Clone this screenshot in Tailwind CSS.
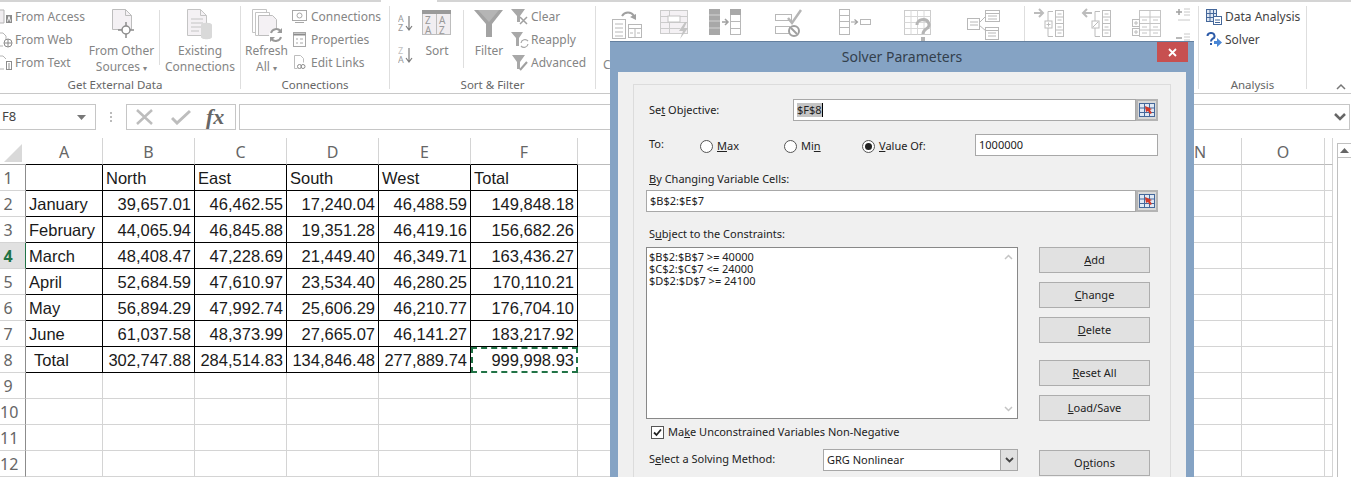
<!DOCTYPE html>
<html lang="en">
<head>
  <meta charset="UTF-8" />
  <title>Solver Parameters</title>
  <script src="https://cdn.jsdelivr.net/npm/@tailwindcss/browser@4"></script>
</head>
<body class="relative w-[1351px] h-[477px] overflow-hidden bg-white font-['Noto_Sans',sans-serif] text-[12px] text-[#858585]">

  <!-- tab strip edge, gap under the active tab -->
  <div class="flex h-[2px]">
    <div class="w-[381px] bg-[#d4d4d4]"></div>
    <div class="w-[56px]"></div>
    <div class="flex-1 bg-[#d4d4d4]"></div>
  </div>

  <!-- ribbon -->
  <div class="flex h-[92px] border-b border-[#c8c8c8]">

    <!-- Get External Data -->
    <div class="flex flex-col w-[250px] -ml-[10px] shrink-0">
      <div class="flex flex-1 pl-[10px]">
        <div class="flex flex-col w-[91px] pt-[3px]">
          <div class="flex items-center h-[23px] gap-[2px]">
            <svg class="w-[13px] h-[16px] shrink-0" viewBox="0 0 13 16"><path d="M0 1h4v13H0" fill="#f1eef1" stroke="#b5b5b5"/><rect x="6" y="6" width="6" height="8" fill="#8c8c8c"/><path d="M7.500 12.500l1.500-5 1.500 5" fill="none" stroke="#fff"/></svg>
            <span class="whitespace-nowrap">From Access</span>
          </div>
          <div class="flex items-center h-[23px] gap-[2px]">
            <svg class="w-[13px] h-[16px] shrink-0" viewBox="0 0 13 16"><path d="M0 1h3l3 3v5M0 14h3" fill="none" stroke="#b5b5b5"/><circle cx="8" cy="11" r="4" fill="#fff" stroke="#8c8c8c"/><path d="M4 11h8M8 7v8" stroke="#8c8c8c"/></svg>
            <span class="whitespace-nowrap">From Web</span>
          </div>
          <div class="flex items-center h-[23px] gap-[2px]">
            <svg class="w-[13px] h-[16px] shrink-0" viewBox="0 0 13 16"><path d="M0 1h3l3 3M0 14h4" fill="none" stroke="#b5b5b5"/><rect x="6.500" y="6.500" width="5" height="8" fill="#fff" stroke="#8c8c8c"/><path d="M8 9h2M8 11h2M8 13h2" stroke="#8c8c8c"/></svg>
            <span class="whitespace-nowrap">From Text</span>
          </div>
        </div>
        <div class="flex flex-col items-center w-[61px] pt-[6px] text-center leading-[16px]">
          <svg class="w-[34px] h-[34px] shrink-0" viewBox="0 0 34 34"><path d="M7.500 1.500h13l6 6v14h-19z" fill="#f4f1f4" stroke="#bdbdbd"/><path d="M20.500 1.500v6h6" fill="none" stroke="#bdbdbd"/><circle cx="21" cy="22" r="4" fill="#fff" stroke="#8c8c8c" stroke-width="1.500"/><path d="M21 14v4M21 26v4M13 22h4M25 22h4" stroke="#8c8c8c" stroke-width="1.500"/></svg>
          <span class="mt-[1px] whitespace-nowrap">From Other<br>Sources <span class="text-[8px]">▾</span></span>
        </div>
        <div class="w-px h-[55px] mt-[8px] ml-[7px] bg-[#dedede]"></div>
        <div class="flex flex-col items-center w-[66px] ml-[7px] pt-[6px] text-center leading-[16px]">
          <svg class="w-[34px] h-[34px] shrink-0" viewBox="0 0 34 34"><path d="M4.500 1.500h13l6 6v20h-19z" fill="#f4f1f4" stroke="#c4c4c4"/><path d="M17.500 1.500v6h6M8 11h12M8 15h12M8 19h12M8 23h8" fill="none" stroke="#c4c4c4"/><path d="M18 17c0-3 11-3 11 0v12c0 3-11 3-11 0z" fill="#d9d9d9"/></svg>
          <span class="mt-[1px]">Existing<br>Connections</span>
        </div>
      </div>
      <div class="h-[17px] text-center text-[11.500px] leading-[17px] text-[#666]">Get External Data</div>
    </div>
    <div class="w-px my-[4px] bg-[#dedede] shrink-0"></div>

    <!-- Connections -->
    <div class="flex flex-col w-[148px] shrink-0">
      <div class="flex flex-1">
        <div class="flex flex-col items-center w-[39px] ml-[6px] pt-[6px] text-center leading-[16px]">
          <svg class="w-[34px] h-[34px] shrink-0" viewBox="0 0 34 34"><path d="M2.500 1.500h14v4M2.500 1.500v23h3" fill="#fff" stroke="#c4c4c4"/><path d="M5.500 4.500h14v4M5.500 4.500v23h3" fill="#fff" stroke="#c4c4c4"/><path d="M8.500 7.500h14l4 4v16h-18z" fill="#f4f1f4" stroke="#bdbdbd"/><circle cx="26" cy="27" r="7" fill="#fff"/><path d="M21 25a5.500 5.500 0 0 1 9.500-2M31 29a5.500 5.500 0 0 1-9.500 2" fill="none" stroke="#9a9a9a" stroke-width="2"/><path d="M32 20v5h-5zM20 34v-5h5z" fill="#9a9a9a"/></svg>
          <span class="mt-[1px]">Refresh<br>All <span class="text-[8px]">▾</span></span>
        </div>
        <div class="flex flex-col pl-[6px] pt-[3px]">
          <div class="flex items-center h-[23px] gap-[4px]">
            <svg class="w-[15px] h-[15px] shrink-0" viewBox="0 0 15 15"><rect x="0.500" y="1.500" width="14" height="10" fill="#fff" stroke="#a8a8a8"/><circle cx="7.500" cy="6.500" r="2.500" fill="none" stroke="#a8a8a8"/><path d="M3 13.500h9" stroke="#a8a8a8"/></svg>
            <span>Connections</span>
          </div>
          <div class="flex items-center h-[23px] gap-[4px]">
            <svg class="w-[15px] h-[15px] shrink-0" viewBox="0 0 15 15"><rect x="1.500" y="0.500" width="12" height="14" fill="#fff" stroke="#a8a8a8"/><path d="M1.500 2.500h12" stroke="#8c8c8c" stroke-width="2"/><path d="M4 7h2M8 7h3M4 11h2M8 11h3" stroke="#a8a8a8"/></svg>
            <span>Properties</span>
          </div>
          <div class="flex items-center h-[23px] gap-[4px]">
            <svg class="w-[15px] h-[15px] shrink-0" viewBox="0 0 15 15"><path d="M2.500 0.500h6l3 3v4M2.500 0.500v13h3" fill="none" stroke="#bdbdbd"/><circle cx="7.500" cy="11.500" r="2" fill="none" stroke="#8c8c8c"/><circle cx="11" cy="11.500" r="2" fill="none" stroke="#8c8c8c"/></svg>
            <span>Edit Links</span>
          </div>
        </div>
      </div>
      <div class="h-[17px] text-center text-[11.500px] leading-[17px] text-[#666]">Connections</div>
    </div>
    <div class="w-px my-[4px] bg-[#dedede] shrink-0"></div>

    <!-- Sort & Filter -->
    <div class="flex flex-col w-[205px] shrink-0">
      <div class="flex flex-1">
        <div class="flex flex-col w-[15px] ml-[8px] pt-[12px] gap-[14px] shrink-0">
          <svg class="w-[15px] h-[18px]" viewBox="0 0 15 18"><text x="0" y="8" font-size="9" fill="#999">A</text><text x="0" y="17" font-size="9" fill="#999">Z</text><path d="M11 2v13M8 12l3 4 3-4" fill="none" stroke="#7d7d7d" stroke-width="1.200"/></svg>
          <svg class="w-[15px] h-[18px]" viewBox="0 0 15 18"><text x="0" y="8" font-size="9" fill="#c2c2c2">Z</text><text x="0" y="17" font-size="9" fill="#999">A</text><path d="M11 2v13M8 12l3 4 3-4" fill="none" stroke="#7d7d7d" stroke-width="1.200"/></svg>
        </div>
        <div class="flex flex-col items-center w-[30px] ml-[9px] pt-[6px] text-center leading-[16px] shrink-0">
          <svg class="w-[30px] h-[34px] shrink-0" viewBox="0 0 30 34"><rect x="0.500" y="2.500" width="28" height="24" fill="#f1eef1" stroke="#bdbdbd"/><rect x="0" y="2" width="29" height="4" fill="#9a9a9a"/><path d="M14.500 6v20" stroke="#bdbdbd"/><text x="3" y="16" font-size="10" fill="#999">Z</text><text x="17" y="16" font-size="10" fill="#999">A</text><text x="3" y="26" font-size="10" fill="#999">A</text><text x="17" y="26" font-size="10" fill="#999">Z</text></svg>
          <span class="mt-[1px]">Sort</span>
        </div>
        <div class="w-px h-[58px] mt-[8px] ml-[11px] bg-[#dedede] shrink-0"></div>
        <div class="flex flex-col items-center w-[30px] ml-[10px] pt-[6px] text-center leading-[16px] shrink-0">
          <svg class="w-[30px] h-[34px] shrink-0" viewBox="0 0 30 34"><path d="M0 2h29L18 16v13h-6V16z" fill="#a3a3a3"/><path d="M4 2h21L15 14z" fill="#b5b5b5"/></svg>
          <span class="mt-[1px]">Filter</span>
        </div>
        <div class="flex flex-col pl-[7px] pt-[3px]">
          <div class="flex items-center h-[23px] gap-[1px]">
            <svg class="w-[19px] h-[18px] shrink-0" viewBox="0 0 19 18"><path d="M0 1h14L9 8v6H6V8z" fill="#a8a8a8"/><path d="M9 9l7 7M16 9l-7 7" stroke="#a0a0a0" stroke-width="1.500"/></svg>
            <span>Clear</span>
          </div>
          <div class="flex items-center h-[23px] gap-[1px]">
            <svg class="w-[19px] h-[18px] shrink-0" viewBox="0 0 19 18"><path d="M0 1h12L8 7v8H5V7z" fill="#a8a8a8"/><path d="M10 12a4 4 0 0 1 7-2M17 13a4 4 0 0 1-7 2" fill="none" stroke="#a8a8a8" stroke-width="1.200"/></svg>
            <span>Reapply</span>
          </div>
          <div class="flex items-center h-[23px] gap-[1px]">
            <svg class="w-[19px] h-[18px] shrink-0" viewBox="0 0 19 18"><path d="M1 1h13L9 8v7H6V8z" fill="#a8a8a8"/><path d="M9 16l7-8" stroke="#a0a0a0" stroke-width="2"/></svg>
            <span>Advanced</span>
          </div>
        </div>
      </div>
      <div class="h-[17px] text-center text-[11.500px] leading-[17px] text-[#666]">Sort &amp; Filter</div>
    </div>
    <div class="w-px my-[4px] bg-[#dedede] shrink-0"></div>

    <!-- Data Tools, the dialog covers its lower half -->
    <div class="flex flex-col w-[428px] shrink-0">
      <div class="flex pt-[6px]">
        <svg class="w-[30px] h-[32px] ml-[16px] shrink-0" viewBox="0 0 30 32"><rect x="0.500" y="11.500" width="13" height="19" fill="#fff" stroke="#b8b8b8"/><path d="M3 16h8M3 20h8M3 24h8M3 28h8" stroke="#b8b8b8"/><rect x="16.500" y="16.500" width="13" height="13" fill="#fff" stroke="#b8b8b8"/><path d="M16.500 20.500h13M23 20.500v9M18 25h3M25 25h3" stroke="#b8b8b8"/><path d="M10 8a7 7 0 0 1 12 0" fill="none" stroke="#a0a0a0" stroke-width="2"/><path d="M18 9l6 3 0-6z" fill="#a0a0a0"/></svg>
        <svg class="w-[30px] h-[32px] ml-[18px] shrink-0" viewBox="0 0 30 32"><rect x="0.500" y="2.500" width="27" height="23" fill="#f4f1f4" stroke="#cccccc"/><path d="M0.500 8.500h27M0.500 14.500h27M0.500 20.500h20M9.500 2.500v23" stroke="#cccccc"/><rect x="8" y="8" width="12" height="6" fill="#fff" stroke="#c4c4c4"/><path d="M25 14l-6 9h4l-3 8 8-11h-4l3-6z" fill="#c4c4c4"/></svg>
        <svg class="w-[32px] h-[32px] ml-[19px] shrink-0" viewBox="0 0 32 32"><rect x="0" y="1" width="11" height="26" fill="#a8a8a8"/><path d="M0 7h11M0 13h11M0 20h11" stroke="#fff" stroke-opacity="0.500"/><rect x="21.500" y="1.500" width="10" height="25" fill="#fff" stroke="#b8b8b8"/><rect x="21" y="1" width="11" height="6" fill="#a8a8a8"/><path d="M21.500 13.500h10M21.500 20.500h10" stroke="#b8b8b8"/><path d="M13 14h6M16 11l3 3-3 3" fill="none" stroke="#a0a0a0" stroke-width="1.500"/></svg>
        <svg class="w-[28px] h-[32px] ml-[33px] shrink-0" viewBox="0 0 28 32"><rect x="1.500" y="6.500" width="16" height="6" fill="#fff" stroke="#b8b8b8"/><rect x="1.500" y="18.500" width="14" height="7" fill="#fff" stroke="#b8b8b8"/><path d="M14 10l4 5 9-13" fill="none" stroke="#b5b5b5" stroke-width="2.500"/><circle cx="20" cy="23" r="5" fill="#fff" stroke="#a0a0a0" stroke-width="2"/><path d="M17 20l6 6" stroke="#a0a0a0" stroke-width="2"/></svg>
        <svg class="w-[32px] h-[32px] ml-[37px] shrink-0" viewBox="0 0 32 32"><rect x="0.500" y="1.500" width="10" height="25" fill="#fff" stroke="#b8b8b8"/><path d="M0.500 7.500h10M0.500 13.500h10M0.500 19.500h10" stroke="#b8b8b8"/><path d="M12 14h6M15.500 11.500l3 2.500-3 2.500" fill="none" stroke="#a0a0a0" stroke-width="1.200"/><rect x="21.500" y="11.500" width="10" height="5" fill="#fff" stroke="#b8b8b8"/></svg>
        <svg class="w-[28px] h-[34px] ml-[33px] shrink-0" viewBox="0 0 28 34"><rect x="0.500" y="2.500" width="26" height="24" fill="#fff" stroke="#cccccc"/><path d="M0.500 8.500h26M0.500 14.500h26M0.500 20.500h26M7 2.500v24M13.500 2.500v24M20 2.500v24" stroke="#d8d8d8"/><path d="M13 17a6 5 0 1 1 9 4c-2 1.500-3 2.500-3 5" fill="none" stroke="#b5b5b5" stroke-width="3"/><rect x="17" y="29" width="4" height="4" fill="#b5b5b5"/></svg>
        <svg class="w-[33px] h-[32px] ml-[35px] shrink-0" viewBox="0 0 33 32"><rect x="0.500" y="10.500" width="12" height="11" fill="#fff" stroke="#b8b8b8"/><path d="M3 14h8M3 17h8" stroke="#b8b8b8"/><rect x="18.500" y="2.500" width="14" height="11" fill="#fff" stroke="#b8b8b8"/><path d="M18.500 5.500h14M21 8h9M21 11h9" stroke="#b8b8b8"/><rect x="18.500" y="19.500" width="13" height="12" fill="#fff" stroke="#b8b8b8"/><path d="M18.500 22.500h13M21 25h8M21 28h8M12 15l7-7M12 17l7 6" stroke="#b8b8b8"/></svg>
      </div>
      <div class="pl-[7px] mt-[15px] leading-[16px]">Columns</div>
    </div>
    <div class="w-px my-[4px] bg-[#dedede] shrink-0"></div>

    <!-- Outline -->
    <div class="flex w-[173px] pt-[6px] shrink-0">
      <svg class="w-[31px] h-[30px] ml-[9px] shrink-0" viewBox="0 0 31 30"><path d="M0 5h9M5 1l4 4-4 4" fill="none" stroke="#bcbcbc" stroke-width="2"/><path d="M19 3.500h-5v25h5" fill="none" stroke="#bcbcbc"/><rect x="11" y="13" width="7" height="7" fill="#fff" stroke="#bcbcbc"/><path d="M12.500 16.500h4M14.500 14.500v4" stroke="#bcbcbc"/><rect x="21.500" y="2.500" width="8" height="26" fill="#fff" stroke="#bcbcbc"/><path d="M21.500 9h8M21.500 15.500h8M21.500 22h8M23.500 6h4M23.500 12h4M23.500 19h4M23.500 25h4" stroke="#bcbcbc"/></svg>
      <svg class="w-[31px] h-[30px] ml-[16px] shrink-0" viewBox="0 0 31 30"><path d="M11 5H2M6 1L2 5l4 4" fill="none" stroke="#bcbcbc" stroke-width="2"/><path d="M19 3.500h-5v25h5" fill="none" stroke="#bcbcbc"/><rect x="11" y="13" width="7" height="7" fill="#fff" stroke="#bcbcbc"/><path d="M12 19l5-5" stroke="#bcbcbc"/><rect x="21.500" y="2.500" width="8" height="26" fill="#fff" stroke="#bcbcbc"/><path d="M21.500 9h8M21.500 15.500h8M21.500 22h8M23.500 6h4M23.500 12h4M23.500 19h4M23.500 25h4" stroke="#bcbcbc"/></svg>
      <svg class="w-[29px] h-[30px] ml-[20px] shrink-0" viewBox="0 0 29 30"><rect x="7.500" y="2.500" width="21" height="26" fill="#fff" stroke="#c4c4c4"/><path d="M7.500 9h21M7.500 15.500h21M7.500 22h21M18 2.500v26M10 12h5M21 12h5M10 19h5M21 19h5M10 25h5M21 25h5" stroke="#c4c4c4"/><rect x="0.500" y="11.500" width="7" height="7" fill="#fff" stroke="#bcbcbc"/><rect x="0.500" y="20.500" width="7" height="7" fill="#fff" stroke="#bcbcbc"/><path d="M2 15h4M4 13v4M2 24h4M4 22v4" stroke="#bcbcbc"/></svg>
      <div class="flex flex-col ml-[15px] gap-[11px] shrink-0">
        <svg class="w-[15px] h-[14px]" viewBox="0 0 15 14"><path d="M0 4h6M3 1v6" stroke="#a0a0a0" stroke-width="1.500"/><path d="M8 1h6M8 4h6M8 7h6M2 12h12" stroke="#c8c8c8"/></svg>
        <svg class="w-[15px] h-[14px]" viewBox="0 0 15 14"><path d="M0 5h6" stroke="#a0a0a0" stroke-width="1.500"/><path d="M8 1h6M8 4h6M8 7h6M2 12h12" stroke="#c8c8c8"/></svg>
      </div>
    </div>
    <div class="w-px my-[4px] bg-[#dedede] shrink-0"></div>

    <!-- Analysis -->
    <div class="flex flex-col w-[107px] shrink-0">
      <div class="flex flex-col flex-1 pl-[7px] pt-[3px] text-[#444]">
        <div class="flex items-center h-[23px] gap-[3px]">
          <svg class="w-[16px] h-[16px] shrink-0" viewBox="0 0 16 16"><rect x="0.500" y="0.500" width="10" height="12" fill="#dfe8f4" stroke="#44679a"/><path d="M0.500 4.500h10M0.500 8.500h10M4 0.500v12M7.500 0.500v12" stroke="#44679a"/><rect x="7.500" y="7.500" width="8" height="8" fill="#fff" stroke="#44679a"/><path d="M9 11h5M9 13.500h5" stroke="#44679a"/></svg>
          <span>Data Analysis</span>
        </div>
        <div class="flex items-center h-[23px] gap-[3px]">
          <svg class="w-[16px] h-[16px] shrink-0" viewBox="0 0 16 16"><path d="M1.500 4a3.500 3 0 1 1 5 2.800C5.500 7.600 5 8 5 9.500" fill="none" stroke="#2d5ba8" stroke-width="2"/><rect x="4" y="11" width="2" height="2" fill="#2d5ba8"/><path d="M8 9h3V6l5 4.500L11 15v-3H8z" fill="#4a87d6"/></svg>
          <span>Solver</span>
        </div>
      </div>
      <div class="h-[17px] text-center text-[11.500px] leading-[17px] text-[#666]">Analysis</div>
    </div>
    <div class="w-px my-[4px] bg-[#dedede] shrink-0"></div>

    <div class="flex items-end flex-1 justify-end pr-[5px] pb-[3px]">
      <svg class="w-[10px] h-[7px]" viewBox="0 0 10 7"><path d="M1 6l4-4 4 4" fill="none" stroke="#777" stroke-width="1.500"/></svg>
    </div>
  </div>

  <!-- formula bar -->
  <div class="flex h-[44px] pt-[10px] pb-[8px]">
    <div class="flex items-center justify-between w-[98px] -ml-[2px] pl-[3px] pr-[9px] border border-[#c6c6c6] text-[#444] text-[13px] shrink-0">
      <span>F8</span>
      <svg class="w-[9px] h-[5px]" viewBox="0 0 9 5"><path d="M0 0h9L4.500 5z" fill="#777"/></svg>
    </div>
    <div class="flex flex-col items-center justify-center w-[30px] gap-[2px] shrink-0">
      <div class="w-[2px] h-[2px] bg-[#bbb]"></div>
      <div class="w-[2px] h-[2px] bg-[#bbb]"></div>
      <div class="w-[2px] h-[2px] bg-[#bbb]"></div>
    </div>
    <div class="flex items-center w-[110px] border border-[#c6c6c6] shrink-0">
      <svg class="w-[18px] h-[16px] ml-[9px]" viewBox="0 0 18 16"><path d="M1 1l15 14M16 1L1 15" stroke="#bdbdbd" stroke-width="2.500"/></svg>
      <svg class="w-[20px] h-[16px] ml-[17px]" viewBox="0 0 20 16"><path d="M1 9l5 5L19 2" fill="none" stroke="#bdbdbd" stroke-width="3"/></svg>
      <span class="ml-[15px] font-['Liberation_Serif',serif] italic font-bold text-[22px] leading-none text-[#666]">fx</span>
    </div>
    <div class="flex items-center justify-end flex-1 ml-[3px] mr-[1px] pr-[3px] border border-[#c6c6c6]">
      <svg class="w-[12px] h-[8px]" viewBox="0 0 12 8"><path d="M1 1l5 5 5-5" fill="none" stroke="#666" stroke-width="2.500"/></svg>
    </div>
  </div>

  <!-- sheet -->
  <div class="flex">
    <div id="sheet" class="grid grid-cols-[26px_77px_92px_92px_92px_92px_107px_83px_83px_83px_83px_83px_83px_83px_83px_83px_8px] grid-rows-[27px] auto-rows-[26px] w-[1333px] font-['Liberation_Sans',Arial,sans-serif] text-[16.500px] text-[#1a1a1a] shrink-0"></div>
    <div class="w-[14px] h-[340px] ml-[4px] mt-[5px] border-l border-t border-[#c0c0c0]">
      <div class="flex items-center justify-center h-[14px] border-b border-[#c0c0c0]">
        <svg class="w-[9px] h-[5px]" viewBox="0 0 9 5"><path d="M4.500 0L9 5H0z" fill="#666"/></svg>
      </div>
    </div>
  </div>

  <!-- Solver dialog floats over the sheet -->
  <div class="absolute left-[610px] top-[41px] w-[584px] h-[470px] bg-[#85a3c4] border-t border-[#64809f] text-[11px] text-[#222]">
    <div class="flex justify-center relative h-[30px] leading-[30px] text-[14px] text-[#33404d]">
      Solver Parameters
      <div class="absolute right-[6px] top-0 flex items-center justify-center w-[31px] h-[20px] bg-[#c75050]">
        <svg class="w-[9px] h-[9px]" viewBox="0 0 9 9"><path d="M1 1l7 7M8 1L1 8" stroke="#fff" stroke-width="1.800"/></svg>
      </div>
    </div>
    <div class="w-[568px] h-[440px] ml-[8px] pl-[15px] pt-[12px] bg-[#f0f0f0]">
      <div class="w-[538px] h-[420px] border border-[#dcdcdc] pl-[12px] pt-[14px] leading-[14px]">

        <div class="flex items-center h-[22px] pl-[3px]">
          <span class="w-[144px]">Se<u>t</u> Objective:</span>
          <div class="flex items-center w-[343px] h-[22px] pl-[3px] bg-white border border-[#a8a8a8]">
            <span class="bg-[#c4c4c4]">$F$8</span><span class="w-px h-[14px] bg-black"></span>
          </div>
          <div class="flex items-center justify-center w-[22px] h-[22px] bg-[#d9d9d9] border-2 border-[#b4b4b4]">
            <svg class="w-[16px] h-[14px]" viewBox="0 0 16 14"><rect x="0.500" y="0.500" width="15" height="13" fill="#dfe8f4" stroke="#44679a"/><path d="M0.500 5h15M0.500 9.500h15M5.500 0.500v13M10.500 0.500v13" stroke="#44679a"/><path d="M6 3l7 3-2 1 2 3-2 1-2-3-2 1z" fill="#d2392b"/></svg>
          </div>
        </div>

        <div class="flex items-center h-[22px] mt-[13px] pl-[3px]">
          <span class="w-[51px] -mt-[2px]">To:</span>
          <label class="flex items-center w-[84px] gap-[4px] mt-[2px]">
            <span class="w-[13px] h-[13px] rounded-full bg-white border border-[#555]"></span>
            <span><u>M</u>ax</span>
          </label>
          <label class="flex items-center w-[78px] gap-[4px] mt-[2px]">
            <span class="w-[13px] h-[13px] rounded-full bg-white border border-[#555]"></span>
            <span>Mi<u>n</u></span>
          </label>
          <label class="flex items-center w-[113px] gap-[4px] mt-[2px]">
            <span class="flex items-center justify-center w-[13px] h-[13px] rounded-full bg-white border border-[#555]"><span class="w-[7px] h-[7px] rounded-full bg-[#222]"></span></span>
            <span><u>V</u>alue Of:</span>
          </label>
          <div class="flex items-center w-[183px] h-[22px] pl-[3px] pb-[1px] bg-white border border-[#a8a8a8]">1000000</div>
        </div>

        <div class="mt-[16px] pl-[3px]"><u>B</u>y Changing Variable Cells:</div>
        <div class="flex h-[22px] mt-[4px]">
          <div class="flex items-center w-[490px] pl-[3px] bg-white border border-[#a8a8a8]">$B$2:$E$7</div>
          <div class="flex items-center justify-center w-[22px] h-[22px] bg-[#d9d9d9] border-2 border-[#b4b4b4]">
            <svg class="w-[16px] h-[14px]" viewBox="0 0 16 14"><rect x="0.500" y="0.500" width="15" height="13" fill="#dfe8f4" stroke="#44679a"/><path d="M0.500 5h15M0.500 9.500h15M5.500 0.500v13M10.500 0.500v13" stroke="#44679a"/><path d="M6 3l7 3-2 1 2 3-2 1-2-3-2 1z" fill="#d2392b"/></svg>
          </div>
        </div>

        <div class="mt-[15px] pl-[3px]">S<u>u</u>bject to the Constraints:</div>
        <div class="flex mt-[6px]">
          <div class="flex flex-col w-[372px]">
            <div class="flex justify-between h-[172px] pl-[2px] pr-[4px] py-[3px] bg-white border border-[#888] text-[11px] leading-[12px]">
              <div>$B$2:$B$7 &gt;= 40000<br>$C$2:$C$7 &lt;= 24000<br>$D$2:$D$7 &gt;= 24100</div>
              <div class="flex flex-col justify-between py-[3px]">
                <svg class="w-[9px] h-[6px]" viewBox="0 0 9 6"><path d="M1 5l3.500-3.500L8 5" fill="none" stroke="#c4c4c4" stroke-width="1.500"/></svg>
                <svg class="w-[9px] h-[6px]" viewBox="0 0 9 6"><path d="M1 1l3.500 3.500L8 1" fill="none" stroke="#c4c4c4" stroke-width="1.500"/></svg>
              </div>
            </div>
            <label class="flex items-center h-[14px] mt-[6px] pl-[5px] gap-[4px]">
              <span class="flex items-center justify-center w-[13px] h-[13px] bg-white border border-[#555]">
                <svg class="w-[9px] h-[9px]" viewBox="0 0 9 9"><path d="M1 4.500l2.500 2.500L8 1.500" fill="none" stroke="#222" stroke-width="1.800"/></svg>
              </span>
              <span>Ma<u>k</u>e Unconstrained Variables Non-Negative</span>
            </label>
            <div class="flex items-center h-[22px] mt-[10px]">
              <span class="w-[177px] pl-[3px] -mt-[2px]">S<u>e</u>lect a Solving Method:</span>
              <div class="flex items-center justify-between w-[195px] h-[22px] pl-[3px] bg-white border border-[#a8a8a8]">
                <span>GRG Nonlinear</span>
                <div class="flex items-center justify-center w-[17px] h-full bg-[#e1e1e1] border-l border-[#a8a8a8]">
                  <svg class="w-[9px] h-[6px]" viewBox="0 0 9 6"><path d="M1 1l3.500 3.500L8 1" fill="none" stroke="#444" stroke-width="1.800"/></svg>
                </div>
              </div>
            </div>
          </div>
          <div class="flex flex-col w-[111px] ml-[21px]">
            <button class="h-[26px] bg-[#e1e1e1] border border-[#adadad]"><u>A</u>dd</button>
            <button class="h-[26px] mt-[9px] bg-[#e1e1e1] border border-[#adadad]"><u>C</u>hange</button>
            <button class="h-[26px] mt-[9px] bg-[#e1e1e1] border border-[#adadad]"><u>D</u>elete</button>
            <button class="h-[26px] mt-[17px] bg-[#e1e1e1] border border-[#adadad]"><u>R</u>eset All</button>
            <button class="h-[26px] mt-[9px] bg-[#e1e1e1] border border-[#adadad]"><u>L</u>oad/Save</button>
            <button class="h-[26px] mt-[29px] bg-[#e1e1e1] border border-[#adadad]">O<u>p</u>tions</button>
          </div>
        </div>

      </div>
    </div>
  </div>

  <script>
    const rows = [
      ["", "North", "East", "South", "West", "Total"],
      ["January", "39,657.01", "46,462.55", "17,240.04", "46,488.59", "149,848.18"],
      ["February", "44,065.94", "46,845.88", "19,351.28", "46,419.16", "156,682.26"],
      ["March", "48,408.47", "47,228.69", "21,449.40", "46,349.71", "163,436.27"],
      ["April", "52,684.59", "47,610.97", "23,534.40", "46,280.25", "170,110.21"],
      ["May", "56,894.29", "47,992.74", "25,606.29", "46,210.77", "176,704.10"],
      ["June", "61,037.58", "48,373.99", "27,665.07", "46,141.27", "183,217.92"],
      [" Total", "302,747.88", "284,514.83", "134,846.48", "277,889.74", "999,998.93"]
    ];
    const letters = ["A", "B", "C", "D", "E", "F", "G", "H", "I", "J", "K", "L", "M", "N", "O", ""];
    const headFont = "font-['Noto_Sans',sans-serif] text-[16px] text-[#666]";

    let html = `<div class="border-b border-[#aaa] overflow-hidden"><svg class="w-[18px] h-[18px] ml-[4px] mt-[6px]" viewBox="0 0 18 18"><path d="M18 0v18H0z" fill="#d9d9d9"/></svg></div>`;
    letters.forEach((l, i) => {
      const edge = i < 6 ? "border-black" : "border-[#bbb]";
      html += `<div class="flex items-center justify-center pt-[2px] border-r border-r-[#d4d4d4] border-b ${edge} ${headFont}">${l}</div>`;
    });

    for (let r = 0; r < 12; r++) {
      const active = r === 3;
      html += active
        ? `<div class="flex items-center pt-[1px] border-r border-r-[#217346] border-b border-b-[#d4d4d4] bg-[#e1e1e1] font-['Noto_Sans',sans-serif] font-bold text-[16px] text-[#217346]"><span class="w-[16px] text-center">${r + 1}</span></div>`
        : `<div class="flex items-center pt-[1px] border-r border-r-[#8c8c8c] border-b border-b-[#d4d4d4] ${headFont}"><span class="w-[16px] text-center">${r + 1}</span></div>`;
      for (let c = 0; c < 16; c++) {
        const text = rows[r] && c < 6 ? rows[r][c] : "";
        if (r === 7 && c === 5) {
          html += `<div class="flex items-center justify-end pr-[2px] border-2 border-dashed border-[#217346] whitespace-nowrap">${text}</div>`;
        } else if (rows[r] && c < 6) {
          const numeric = r > 0 && c > 0;
          const pad = numeric ? "justify-end pr-[3px]" : (text === " Total" ? "pl-[8px]" : "pl-[3px]");
          html += `<div class="flex items-center pt-[1px] ${pad} border-r border-b border-black whitespace-nowrap">${text}</div>`;
        } else {
          html += `<div class="border-r border-b border-[#d4d4d4]"></div>`;
        }
      }
    }
    document.getElementById("sheet").innerHTML = html;
  </script>
</body>
</html>
